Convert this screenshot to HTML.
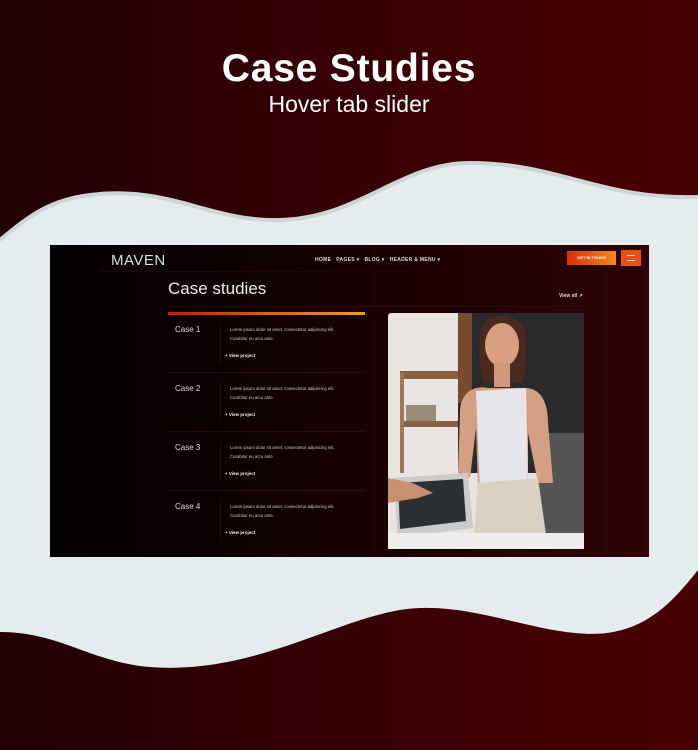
<!DOCTYPE html>
<html><head><meta charset="utf-8"><style>
*{margin:0;padding:0;box-sizing:border-box}
body{width:698px;height:750px;overflow:hidden;position:relative;font-family:"Liberation Sans",sans-serif;background:linear-gradient(90deg,#220003 0%,#350004 45%,#4a0002 100%)}
.t1{position:absolute;top:47px;left:0;width:698px;text-align:center;color:#fff;font-weight:bold;font-size:39px;letter-spacing:0.8px}
.t2{position:absolute;top:91px;left:0;width:698px;text-align:center;color:#fff;font-size:23px}
svg.bg{position:absolute;left:0;top:0}
.shot{position:absolute;left:50px;top:245px;width:599px;height:312px;background:linear-gradient(90deg,#050101 0%,#0b0102 25%,#1a0103 55%,#2f0204 100%);overflow:hidden;color:#fff}
.abs{position:absolute}
.nav{font-size:5px;font-weight:bold;letter-spacing:.3px;color:#ddd}
.case{position:absolute;left:118px;width:197px;height:58px;border-bottom:1px solid #2a0a0c}
.case .n{position:absolute;left:7px;top:10px;font-size:8px;color:#ddd}
.case .l{position:absolute;left:52px;top:8px;width:1px;height:40px;background:#2a0a0c}
.case .d{position:absolute;left:62px;top:10px;font-size:4.3px;line-height:9px;color:#ccc}
.case .v{position:absolute;left:57px;top:38px;font-size:4.5px;font-weight:bold;color:#eee}
</style></head><body>
<svg class="bg" width="698" height="750">
<path d="M0 240 C30 215 50 200 90 195 C170 185 210 222 280 220 C360 218 400 163 470 163 C560 163 600 200 698 197 L698 570 C670 605 640 640 575 633 C520 628 460 600 400 610 C330 622 250 675 150 667 C90 662 60 632 0 632 Z" fill="#e5ecef"/>
<path d="M0 240 C30 215 50 200 90 195 C170 185 210 222 280 220 C360 218 400 163 470 163 C560 163 600 200 698 197" fill="none" stroke="#cdd5d9" stroke-width="4"/>
</svg>
<div class="t1">Case Studies</div>
<div class="t2">Hover tab slider</div>
<div class="shot">
 <div class="abs" style="left:61px;top:7px;font-size:15px;color:#ddd;letter-spacing:0.5px">MAVEN</div>
 <div class="abs nav" style="left:265px;top:12px">HOME &nbsp; PAGES ▾ &nbsp; BLOG ▾ &nbsp; HEADER &amp; MENU ▾</div>
 <div class="abs" style="left:517px;top:6px;width:49px;height:14px;background:linear-gradient(90deg,#d8300a,#f08a18);font-size:4px;font-weight:bold;text-align:center;line-height:14px">GET IN TOUCH</div>
 <div class="abs" style="left:571px;top:5px;width:20px;height:16px;background:#e85018"><div style="margin:5px 6px;height:6px;border-top:1px solid #fdb;border-bottom:1px solid #fdb"></div></div>
 <div class="abs" style="left:50px;top:26px;width:549px;height:1px;background:#1e0608"></div>
 <div class="abs" style="left:118px;top:34px;font-size:17px;color:#eee">Case studies</div>
 <div class="abs" style="left:509px;top:48px;font-size:5px;font-weight:bold;color:#ddd">View all ↗</div>
 <div class="abs" style="left:118px;top:61px;width:416px;height:1px;background:#2a0a0c"></div>
 <div class="abs" style="left:118px;top:67px;width:197px;height:3px;background:linear-gradient(90deg,#c81a0a,#f0a020)"></div>
 <div class="case" style="top:70px"><div class="n">Case 1</div><div class="l"></div><div class="d">Lorem ipsum dolor sit amet, consectetur adipiscing elit.<br>Curabitur eu arcu ante.</div><div class="v">+ View project</div></div>
 <div class="case" style="top:129px"><div class="n">Case 2</div><div class="l"></div><div class="d">Lorem ipsum dolor sit amet, consectetur adipiscing elit.<br>Curabitur eu arcu ante.</div><div class="v">+ View project</div></div>
 <div class="case" style="top:188px"><div class="n">Case 3</div><div class="l"></div><div class="d">Lorem ipsum dolor sit amet, consectetur adipiscing elit.<br>Curabitur eu arcu ante.</div><div class="v">+ View project</div></div>
 <div class="case" style="top:247px;border:none"><div class="n">Case 4</div><div class="l"></div><div class="d">Lorem ipsum dolor sit amet, consectetur adipiscing elit.<br>Curabitur eu arcu ante.</div><div class="v">+ View project</div></div>
 <svg class="abs" style="left:338px;top:68px" width="196" height="236" viewBox="0 0 196 236">
  <rect width="196" height="236" rx="3" fill="#e8e4e2"/>
  <rect x="70" y="0" width="126" height="160" fill="#2a2a2c"/>
  <rect x="70" y="0" width="14" height="90" fill="#7a4a2e"/>
  <rect x="12" y="58" width="58" height="8" fill="#8a6040"/>
  <rect x="12" y="108" width="58" height="6" fill="#8a6040"/>
  <rect x="12" y="60" width="4" height="100" fill="#a07850"/>
  <rect x="18" y="92" width="30" height="16" fill="#9a8a7a"/>
  <rect x="150" y="120" width="46" height="116" fill="#555"/>
  <path d="M95 12 C100 0 130 0 136 15 C140 35 138 60 134 70 L96 70 C90 50 90 25 95 12Z" fill="#4a2a1c"/>
  <ellipse cx="114" cy="32" rx="17" ry="22" fill="#d9a080"/>
  <rect x="106" y="50" width="16" height="24" fill="#d09878"/>
  <path d="M72 100 C72 80 85 72 100 75 L135 75 C150 74 160 85 160 110 L165 170 L150 170 L140 120 L140 175 L90 175 L88 115 L82 165 L70 160 Z" fill="#d4a084"/>
  <path d="M88 78 L138 75 L140 175 L92 178 Z" fill="#e6e6ea"/>
  <path d="M90 170 L150 165 L160 236 L85 236 Z" fill="#dcd0c2"/>
  <path d="M5 165 L80 160 L85 215 L10 225 Z" fill="#ccc"/>
  <path d="M10 170 L75 166 L78 208 L12 216 Z" fill="#2a3034"/>
  <path d="M0 165 L25 170 L45 180 L30 185 L0 190 Z" fill="#c89070"/>
  <rect x="0" y="220" width="196" height="16" fill="#eee"/>
 </svg>
</div>
</body></html>
